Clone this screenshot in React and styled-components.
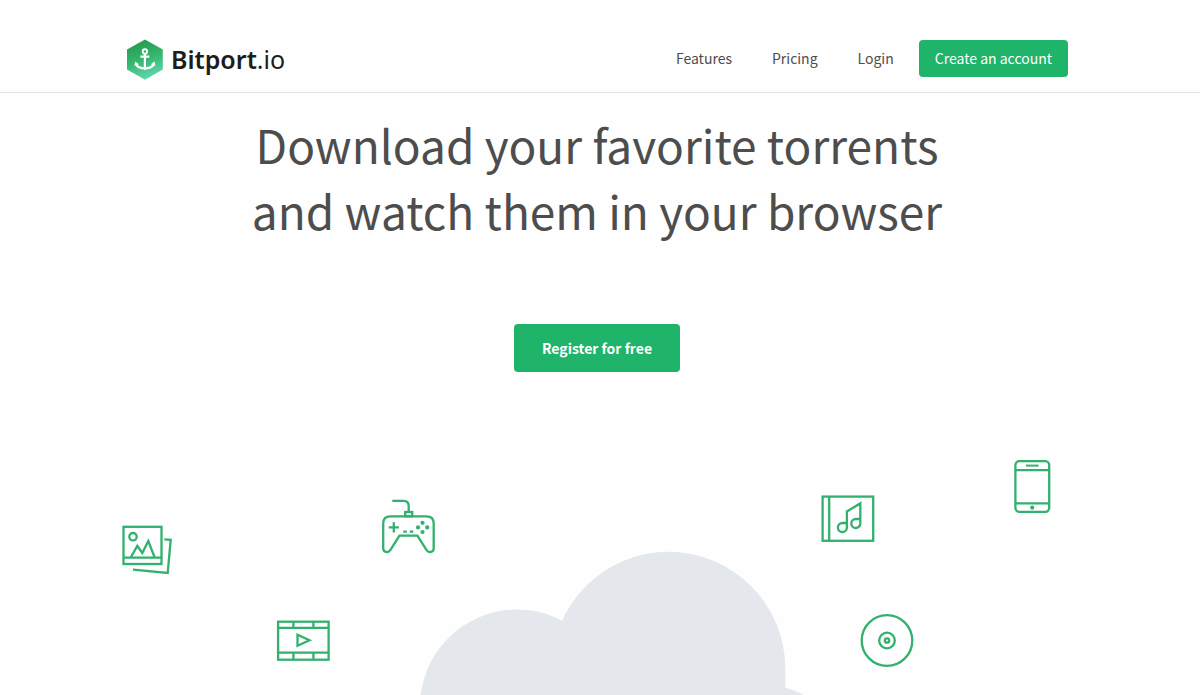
import React from 'react';
import styled, { createGlobalStyle } from 'styled-components';

const GlobalStyle = createGlobalStyle`
  * {
    box-sizing: border-box;
  }

  body {
    margin: 0;
    background-color: #fefefe;
    color: #4d4d4d;
    font-family: 'Noto Sans CJK SC', 'Noto Sans', sans-serif;
  }
`;

const Header = styled.header`
  padding: 39px 6px 12px 0;
  border-bottom: 1px solid #e2e2e2;
`;

const HeaderInner = styled.div`
  max-width: 942px;
  margin: 0 auto;
  display: flex;
  justify-content: space-between;
  align-items: flex-start;
`;

const Logo = styled.a`
  display: flex;
  align-items: center;
  gap: 8px;
  height: 41px;
  color: #1c1c1c;
  font-family: 'Noto Sans', 'Open Sans', sans-serif;
  font-size: 25px;
  font-weight: 600;
  line-height: 41px;
  text-decoration: none;

  span span {
    font-weight: 400;
  }
`;

const Nav = styled.nav`
  display: flex;
  align-items: center;
  gap: 40px;
  padding-top: 1px;
`;

const NavLink = styled.a`
  color: #4d4d4d;
  font-size: 14px;
  line-height: 21px;
  text-decoration: none;

  &:hover {
    color: #20b46a;
  }
`;

const Button = styled.button`
  padding: ${(props) => (props.$large ? '12px 28px' : '8px 16px')};
  margin-left: ${(props) => (props.$large ? '0' : '-15px')};
  border: none;
  border-radius: 4px;
  background-color: #20b46a;
  color: #fff;
  font-family: inherit;
  font-size: 14px;
  font-weight: ${(props) => (props.$large ? 700 : 400)};
  line-height: ${(props) => (props.$large ? '24px' : '21px')};
  cursor: pointer;

  &:hover {
    background-color: #1a9c5b;
  }
`;

const Hero = styled.main`
  display: flex;
  flex-direction: column;
  align-items: center;
  padding: 18px 6px 0 0;
  text-align: center;
`;

const Title = styled.h1`
  margin: 0 0 81px;
  font-size: 46px;
  font-weight: 400;
  line-height: 66px;
`;

const Illustration = styled.svg`
  display: block;
  width: 100%;
  max-width: 960px;
  margin-top: 78px;
  fill: none;
  stroke: #32b06e;
  stroke-width: 2.3;
`;

const LogoMark = () => (
  <svg width="37" height="41" viewBox="0 0 37 41" fill="none" aria-hidden="true">
    <defs>
      <linearGradient id="logo-fill" x1="0.3" y1="0" x2="0.6" y2="1">
        <stop offset="0" stopColor="#249a4c" />
        <stop offset="0.5" stopColor="#37b56f" />
        <stop offset="1" stopColor="#5fdcb4" />
      </linearGradient>
    </defs>
    <path d="M19 0.5L36.8 10.5V30.5L19 40.7L1 30.5V10.5Z" fill="url(#logo-fill)" />
    <g transform="translate(0.4 -0.6)" stroke="#fff">
      <circle cx="18.5" cy="13" r="2.2" strokeWidth="1.9" />
      <path d="M18.5 15V29.5M14 18.2H23" strokeWidth="2.2" />
      <path d="M9.5 25.5C11 29 14.5 30 18.5 30S26 29 27.5 25.5" strokeWidth="2.4" />
      <path d="M8 27.5L8.8 23.2L12.6 25.8ZM29 27.5L28.2 23.2L24.4 25.8ZM16.5 30H20.5L18.5 32Z" fill="#fff" stroke="none" />
    </g>
  </svg>
);

const Cloud = () => (
  <g fill="#e4e8ed" stroke="none">
    <circle cx="400" cy="256.5" r="97" />
    <path d="M434.7 245V218.5A116.8 116.8 0 0 1 668.3 218.5V245Z" />
    <circle cx="639" cy="333" r="100" />
  </g>
);

const Photos = () => (
  <g transform="translate(5 75)">
    <rect x="1.5" y="1.8" width="38" height="37.2" />
    <circle cx="11" cy="11.7" r="3.7" />
    <path d="M1.5 32.7H39.5M8.7 32.5L15.3 21L20.3 28L26.3 16L32.7 32.5" />
    <path d="M42.3 14.3L48.7 14.8L45.7 48L11 44.7" />
  </g>
);

const Gamepad = () => (
  <g transform="translate(265 50)">
    <path d="M10.3 0.8H21.5Q26.7 0.8 26.7 6V12" />
    <rect x="23.2" y="12" width="7" height="4.3" />
    <path d="M8.2 16.3H44.6Q51.7 16.3 51.7 23.5V48.3C51.7 52.4 46.6 53.4 44.6 50.2L35.4 35.7H17.5L8.3 50.2C6.3 53.4 1.2 52.4 1.2 48.3V23.5Q1.2 16.3 8.2 16.3Z" />
    <path d="M11.8 22.2V32.4M6.7 27.3H16.9M21.3 31.7H24.8M27.8 31.7H31.3" />
    <g fill="#32b06e" stroke="none">
      <circle cx="40.5" cy="22.8" r="2.1" />
      <circle cx="40.5" cy="32" r="2.1" />
      <circle cx="36" cy="27.4" r="2.1" />
      <circle cx="45.2" cy="27.4" r="2.1" />
    </g>
  </g>
);

const Film = () => (
  <g transform="translate(160 170)">
    <rect x="1.1" y="1.7" width="50.5" height="38" />
    <path d="M1 7.9H51.6M1 32.7H51.6M16.4 1.7V7.9M36.4 1.7V7.9M16.4 32.7V39.7M36.4 32.7V39.7" />
    <path d="M20.5 14.8V25.8L32.4 20.3Z" />
  </g>
);

const Music = () => (
  <g transform="translate(704 45)">
    <rect x="1.6" y="1.6" width="50.6" height="44.2" />
    <path d="M8.2 1.6V45.8" />
    <path d="M25.9 28H21.4A4.5 4.5 0 1 0 25.9 32.5V16.5L39.3 8.4V28.5A4.5 4.5 0 1 1 34.8 24H39.3" />
  </g>
);

const Disc = () => (
  <g transform="translate(770 190.5)">
    <circle r="25.3" />
    <circle r="7.8" />
    <circle r="2.2" />
  </g>
);

const Phone = () => (
  <g transform="translate(897.6 10)">
    <rect x="0.8" y="1.2" width="33.8" height="50.6" rx="4" />
    <path d="M0.8 10.2H34.6M0.8 43.4H34.6" />
    <path d="M11.3 5.6H24" strokeWidth="2" />
    <circle cx="17.6" cy="47.6" r="2.1" fill="#32b06e" stroke="none" />
  </g>
);

const App = () => {
  return (
    <>
      <GlobalStyle />
      <Header>
        <HeaderInner>
          <Logo href="#">
            <LogoMark />
            <span>
              Bitport<span>.io</span>
            </span>
          </Logo>
          <Nav>
            <NavLink href="#features">Features</NavLink>
            <NavLink href="#pricing">Pricing</NavLink>
            <NavLink href="#login">Login</NavLink>
            <Button type="button">Create an account</Button>
          </Nav>
        </HeaderInner>
      </Header>
      <Hero>
        <Title>
          Download your favorite torrents
          <br />
          and watch them in your browser
        </Title>
        <Button type="button" $large>
          Register for free
        </Button>
        <Illustration viewBox="0 0 960 245" aria-hidden="true">
          <Cloud />
          <Photos />
          <Gamepad />
          <Film />
          <Music />
          <Disc />
          <Phone />
        </Illustration>
      </Hero>
    </>
  );
};

export default App;
